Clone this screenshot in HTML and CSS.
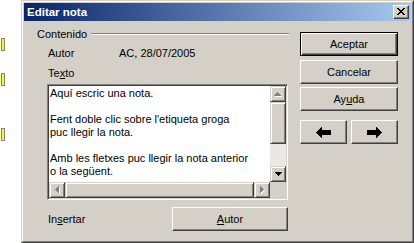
FILE: index.html
```html
<!DOCTYPE html>
<html lang="ca">
<head>
<meta charset="utf-8">
<title>Editar nota</title>
<link rel="stylesheet" href="styles.css">
</head>
<body>
<div class="page">
  <div class="margin">
    <span class="marker"></span>
    <span class="marker m2"></span>
    <span class="marker m3"></span>
  </div>
  <div class="window">
    <div class="frame">
      <div class="titlebar">
        <span class="title">Editar nota</span>
        <span class="close-btn"><svg width="8" height="7" viewBox="0 0 8 7" shape-rendering="crispEdges"><path d="M0 0h2v1H0zM6 0h2v1H6zM1 1h2v1H1zM5 1h2v1H5zM2 2h4v1H2zM3 3h2v1H3zM2 4h4v1H2zM1 5h2v1H1zM5 5h2v1H5zM0 6h2v1H0zM6 6h2v1H6z" fill="#000"/></svg></span>
      </div>
      <div class="client">
        <div class="main">
          <div class="group-head"><span>Contenido</span><span class="rule"></span></div>
          <div class="field-row"><span class="field-label">Autor</span><span>AC, 28/07/2005</span></div>
          <div class="text-label">Te<u>x</u>to</div>
          <div class="editbox">
            <div class="edit-top">
              <div class="edit-text">Aquí escric una nota.

Fent doble clic sobre l'etiqueta groga
puc llegir la nota.

Amb les fletxes puc llegir la nota anterior
o la següent.</div>
              <div class="vscroll">
                <div class="sb-btn"><svg width="8" height="5" viewBox="0 0 8 5" shape-rendering="crispEdges"><path d="M4 1h1v1H4zM3 2h3v1H3zM2 3h5v1H2zM1 4h7v1H1z" fill="#fff"/><path d="M3 0h1v1H3zM2 1h3v1H2zM1 2h5v1H1zM0 3h7v1H0z" fill="#808080"/></svg></div>
                <div class="sb-thumb vthumb"></div>
                <div class="sb-track"></div>
                <div class="sb-btn"><svg width="7" height="4" viewBox="0 0 7 4" shape-rendering="crispEdges"><path d="M0 0h7v1H0zM1 1h5v1H1zM2 2h3v1H2zM3 3h1v1H3z" fill="#000"/></svg></div>
              </div>
            </div>
            <div class="edit-bottom">
              <div class="hscroll">
                <div class="sb-btn"><svg width="5" height="8" viewBox="0 0 5 8" shape-rendering="crispEdges"><path d="M1 4h1v1H1zM2 3h1v3H2zM3 2h1v5H3zM4 1h1v7H4z" fill="#fff"/><path d="M0 3h1v1H0zM1 2h1v3H1zM2 1h1v5H2zM3 0h1v7H3z" fill="#808080"/></svg></div>
                <div class="sb-thumb hthumb"></div>
                <div class="sb-btn"><svg width="5" height="8" viewBox="0 0 5 8" shape-rendering="crispEdges"><path d="M1 1h1v7H1zM2 2h1v5H2zM3 3h1v3H3zM4 4h1v1H4z" fill="#fff"/><path d="M0 0h1v7H0zM1 1h1v5H1zM2 2h1v3H2zM3 3h1v1H3z" fill="#808080"/></svg></div>
              </div>
              <div class="corner"></div>
            </div>
          </div>
          <div class="insert-row">
            <span>In<u>s</u>ertar</span>
            <div class="btn author-btn"><span><u>A</u>utor</span></div>
          </div>
        </div>
        <div class="side">
          <div class="btn default">Aceptar</div>
          <div class="btn cancel">Cancelar</div>
          <div class="btn help">Ay<u>u</u>da</div>
          <div class="nav-row">
            <div class="btn nav"><svg width="15" height="11" viewBox="0 0 15 11" shape-rendering="crispEdges"><path d="M0 5h1v1H0zM1 4h1v3H1zM2 3h1v5H2zM3 2h1v7H3zM4 1h1v9H4zM5 0h1v11H5zM6 3h9v5H6z" fill="#000"/></svg></div>
            <div class="btn nav"><svg width="15" height="11" viewBox="0 0 15 11" shape-rendering="crispEdges"><path d="M14 5h1v1h-1zM13 4h1v3h-1zM12 3h1v5h-1zM11 2h1v7h-1zM10 1h1v9h-1zM9 0h1v11H9zM0 3h9v5H0z" fill="#000"/></svg></div>
          </div>
        </div>
      </div>
    </div>
  </div>
</div>
</body>
</html>
```

FILE: styles.css
```css
html, body {
  margin: 0;
  padding: 0;
  background: #fff;
}

body {
  font-family: "Liberation Sans", Arial, sans-serif;
  font-size: 11px;
  line-height: 13px;
  color: #000;
}

.page {
  display: flex;
  width: 414px;
  height: 243px;
  overflow: hidden;
}

.margin {
  width: 21px;
  flex: none;
  display: flex;
  flex-direction: column;
  align-items: flex-start;
  box-sizing: border-box;
  padding: 38px 0 0 1px;
}

.marker {
  display: block;
  width: 4px;
  height: 13px;
  box-sizing: border-box;
  border: 1px solid #808080;
  background: #ffff00;
}

.marker.m2 { margin-top: 22px; }
.marker.m3 { margin-top: 42px; }

.window {
  width: 393px;
  height: 243px;
  flex: none;
  box-sizing: border-box;
  border: 1px solid;
  border-color: #d4d0c8 #404040 #404040 #d4d0c8;
  background: #d4d0c8;
}

.frame {
  height: 100%;
  box-sizing: border-box;
  border: 1px solid;
  border-color: #fff #808080 #808080 #fff;
  padding: 1px;
  display: flex;
  flex-direction: column;
}

.titlebar {
  height: 18px;
  flex: none;
  display: flex;
  align-items: center;
  box-sizing: border-box;
  padding: 0 2px 0 3px;
  background: linear-gradient(to right, #0a246a, #a6caf0);
}

.title {
  flex: 1;
  color: #fff;
  font-weight: bold;
  font-size: 11.5px;
  padding-top: 1px;
}

.close-btn {
  display: block;
  width: 16px;
  height: 14px;
  box-sizing: border-box;
  border: 1px solid;
  border-color: #fff #404040 #404040 #fff;
  box-shadow: inset -1px -1px #808080;
  background: #d4d0c8;
  padding: 2px 0 0 3px;
}

.close-btn svg { display: block; }

.client {
  flex: 1;
  display: flex;
  padding: 7px 0 0 13px;
}

.main {
  width: 252px;
  flex: none;
  display: flex;
  flex-direction: column;
}

.group-head {
  display: flex;
  height: 13px;
}

.rule {
  flex: 1;
  height: 2px;
  margin: 5px 0 0 4px;
  box-sizing: border-box;
  border-top: 1px solid #808080;
  border-bottom: 1px solid #fff;
}

.field-row {
  display: flex;
  margin: 6px 0 0 11px;
}

.field-label { width: 71px; }

.text-label { margin: 7px 0 0 11px; }

.editbox {
  width: 241px;
  height: 116px;
  margin: 4px 0 0 10px;
  box-sizing: border-box;
  border: 1px solid;
  border-color: #808080 #fff #fff #808080;
  box-shadow: inset 1px 1px #404040, inset -1px -1px #d4d0c8;
  padding: 1px;
  display: flex;
  flex-direction: column;
}

.edit-top {
  display: flex;
  height: 96px;
}

.edit-text {
  flex: 1;
  background: #fff;
  padding: 1px 0 0 1px;
  white-space: pre;
  overflow: hidden;
}

.vscroll {
  width: 16px;
  display: flex;
  flex-direction: column;
}

.sb-btn,
.sb-thumb {
  box-sizing: border-box;
  border: 1px solid;
  border-color: #d4d0c8 #404040 #404040 #d4d0c8;
  box-shadow: inset 1px 1px #fff, inset -1px -1px #808080;
  background: #d4d0c8;
}

.sb-btn {
  width: 16px;
  height: 16px;
  flex: none;
  display: flex;
  align-items: center;
  justify-content: center;
}

.sb-btn svg { display: block; }

.vthumb { height: 42px; flex: none; }

.sb-track {
  flex: 1;
  background: #eae8e4;
}

.edit-bottom {
  display: flex;
  height: 16px;
}

.hscroll {
  flex: 1;
  display: flex;
}

.hthumb { flex: 1; }

.corner {
  width: 16px;
  background: #d4d0c8;
}

.insert-row {
  display: flex;
  align-items: center;
  margin-top: 7px;
  padding-left: 11px;
}

.btn {
  height: 24px;
  box-sizing: border-box;
  border: 1px solid;
  border-color: #fff #404040 #404040 #fff;
  box-shadow: inset -1px -1px #808080;
  background: #d4d0c8;
  display: flex;
  align-items: center;
  justify-content: center;
}

.btn svg { display: block; }

.author-btn {
  width: 116px;
  margin: 0 1px 0 auto;
}

.side {
  width: 98px;
  flex: none;
  margin-left: 11px;
  padding-top: 4px;
  display: flex;
  flex-direction: column;
}

.btn.default {
  border-color: #000;
  box-shadow: inset 1px 1px #fff, inset -1px -1px #404040, inset -2px -2px #808080;
}

.btn.cancel { margin-top: 4px; }
.btn.help { margin-top: 3px; }

.nav-row {
  display: flex;
  gap: 4px;
  margin-top: 9px;
}

.btn.nav { width: 47px; }
```
